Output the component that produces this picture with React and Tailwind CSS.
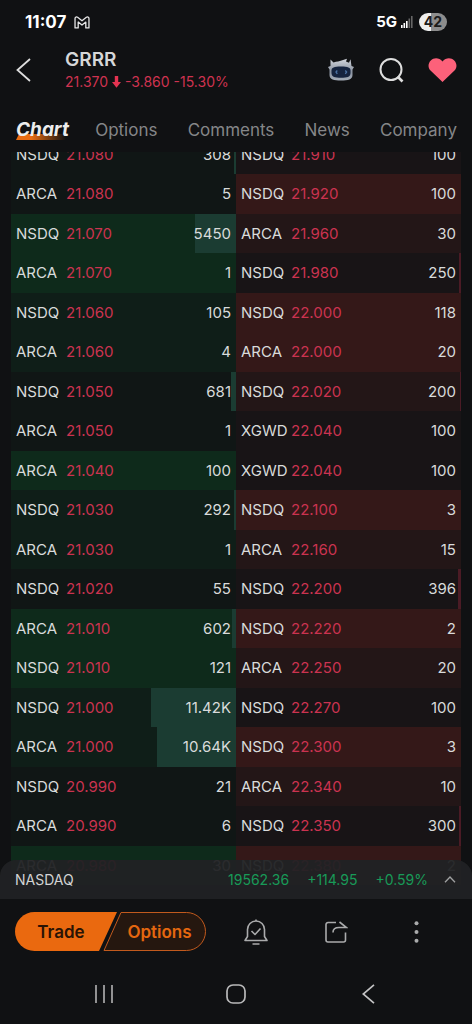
import React, { useState } from 'react';

const bids = [
  { venue: 'NSDQ', price: '21.080', size: 308 },
  { venue: 'ARCA', price: '21.080', size: 5 },
  { venue: 'NSDQ', price: '21.070', size: 5450 },
  { venue: 'ARCA', price: '21.070', size: 1 },
  { venue: 'NSDQ', price: '21.060', size: 105 },
  { venue: 'ARCA', price: '21.060', size: 4 },
  { venue: 'NSDQ', price: '21.050', size: 681 },
  { venue: 'ARCA', price: '21.050', size: 1 },
  { venue: 'ARCA', price: '21.040', size: 100 },
  { venue: 'NSDQ', price: '21.030', size: 292 },
  { venue: 'ARCA', price: '21.030', size: 1 },
  { venue: 'NSDQ', price: '21.020', size: 55 },
  { venue: 'ARCA', price: '21.010', size: 602 },
  { venue: 'NSDQ', price: '21.010', size: 121 },
  { venue: 'NSDQ', price: '21.000', size: 11420 },
  { venue: 'ARCA', price: '21.000', size: 10640 },
  { venue: 'NSDQ', price: '20.990', size: 21 },
  { venue: 'ARCA', price: '20.990', size: 6 },
  { venue: 'ARCA', price: '20.980', size: 30 },
];

const asks = [
  { venue: 'NSDQ', price: '21.910', size: 100 },
  { venue: 'NSDQ', price: '21.920', size: 100 },
  { venue: 'ARCA', price: '21.960', size: 30 },
  { venue: 'NSDQ', price: '21.980', size: 250 },
  { venue: 'NSDQ', price: '22.000', size: 118 },
  { venue: 'ARCA', price: '22.000', size: 20 },
  { venue: 'NSDQ', price: '22.020', size: 200 },
  { venue: 'XGWD', price: '22.040', size: 100 },
  { venue: 'XGWD', price: '22.040', size: 100 },
  { venue: 'NSDQ', price: '22.100', size: 3 },
  { venue: 'ARCA', price: '22.160', size: 15 },
  { venue: 'NSDQ', price: '22.200', size: 396 },
  { venue: 'NSDQ', price: '22.220', size: 2 },
  { venue: 'ARCA', price: '22.250', size: 20 },
  { venue: 'NSDQ', price: '22.270', size: 100 },
  { venue: 'NSDQ', price: '22.300', size: 3 },
  { venue: 'ARCA', price: '22.340', size: 10 },
  { venue: 'NSDQ', price: '22.350', size: 300 },
  { venue: 'NSDQ', price: '22.380', size: 2 },
];

const FULL_BAR = 30200;

// one shade per price level, repeating
const bidTones = ['bg-[#101615]', 'bg-[#0e2a1b]', 'bg-[#0f1e18]'];
const askTones = ['bg-[#181416]', 'bg-[#341818]', 'bg-[#231617]'];

const formatSize = (size) => (size >= 10000 ? `${(size / 1000).toFixed(2)}K` : String(size));

const BookSide = ({ label, rows, tones, bar }) => {
  const levels = [...new Set(rows.map(row => row.price))];

  return (
    <table aria-label={label} className="w-1/2 border-collapse text-[15px] leading-5 text-[#d9dbdb]">
      <tbody>
        {rows.map((row, i) => (
          <tr
            key={i}
            className={`relative h-[39px] even:h-10 ${tones[levels.indexOf(row.price) % 3]}`}
          >
            <td className="w-[55px] p-0 pl-[5px]">{row.venue}</td>
            <td className="p-0 text-[#cb3350]">{row.price}</td>
            <td className="p-0 pr-[5px] text-right">
              <span
                className={`absolute inset-y-0 right-0 ${bar}`}
                style={{ width: row.size > 150 ? `${(row.size / FULL_BAR) * 100}%` : 0 }}
              />
              <span className="relative">{formatSize(row.size)}</span>
            </td>
          </tr>
        ))}
      </tbody>
    </table>
  );
};

const StatusBar = () => (
  <div className="flex h-11 shrink-0 items-center justify-between pl-[25px] pr-[25px] text-white">
    <div className="flex items-center gap-2">
      <span className="text-[17px] font-bold leading-5">11:07</span>
      <svg width="16" height="13" viewBox="0 0 17 14" fill="none" stroke="#e8e8e8" strokeWidth="1.400" strokeLinejoin="round">
        <path d="M1 12.8V2.6C1 1 2.6.6 3.8 1.4L8.500 5.200 13.200 1.400C14.400.6 16 1 16 2.600V12.800H12.600V6.500L8.500 9.700 4.400 6.500V12.800Z" />
      </svg>
    </div>
    <div className="flex items-center gap-1">
      <span className="text-[15px] font-bold leading-5">5G</span>
      <svg width="12" height="12" viewBox="0 0 12 12">
        <rect x="0" y="9" width="1.600" height="3" fill="#fff" />
        <rect x="2.500" y="7" width="1.600" height="5" fill="#fff" />
        <rect x="5" y="5" width="1.600" height="7" fill="#fff" />
        <rect x="7.500" y="2.500" width="1.600" height="9.500" fill="#666" />
        <rect x="10" y="0" width="1.600" height="12" fill="#666" />
      </svg>
      <span className="ml-[2px] h-[18px] w-7 rounded-full bg-linear-to-r from-[#eeeeee] from-42% to-[#8d8d8d] to-42% text-center text-sm font-bold leading-[18px] text-[#1b1b1b]">
        42
      </span>
    </div>
  </div>
);

const RobotIcon = () => (
  <svg width="28" height="24" viewBox="0 0 28 24">
    <defs>
      <linearGradient id="shell" x1="0" y1="0" x2="0" y2="1">
        <stop offset="0" stopColor="#d3d6dd" />
        <stop offset="0.6" stopColor="#8992a0" />
        <stop offset="1" stopColor="#a4acb8" />
      </linearGradient>
    </defs>
    <path d="M3.500 8 3.500 1.500 6.500 4.500C10 3.200 12.500 3.500 14.500 2.500L20 .8 19 3.500 22 4.800 23.500 1.200 24.500 8 27 9 25.500 11.500V17C25.500 21.500 21 22.500 14 22.500S2.500 21.500 2.500 17V11.500L1 9Z" fill="url(#shell)" />
    <path d="M4.500 12.500C4.500 9.500 7 8.500 14 8.500S23.500 9.500 23.500 12.500V15C23.500 19 20 19.800 14 19.800S4.500 19 4.500 15Z" fill="#15233f" />
    <path d="M10.300 12.500 9 14 10.300 15.800M18.300 12.500 19.600 14 18.300 15.800" fill="none" stroke="#4b72a4" strokeWidth="1.300" />
  </svg>
);

const Header = () => (
  <header className="flex h-[52px] shrink-0 items-center pl-4 pr-[15px]">
    <button aria-label="Back" className="mr-[34px]">
      <svg width="15" height="24" viewBox="0 0 15 24" fill="none" stroke="#dedede" strokeWidth="1.800">
        <path d="M14 1 1.500 12 14 23" />
      </svg>
    </button>
    <div>
      <h1 className="text-[19px] font-semibold leading-6 text-[#d6d7d8]">GRRR</h1>
      <p className="flex items-center gap-1 whitespace-nowrap text-sm leading-5 text-[#cf3350]">
        <span>21.370</span>
        <svg width="9" height="12" viewBox="0 0 9 12" fill="#e43351">
          <path d="M2.800 0H6.200V6H9L4.500 11.800 0 6H2.800Z" />
        </svg>
        <span>-3.860</span>
        <span>-15.30%</span>
      </p>
    </div>
    <div className="ml-auto flex items-center gap-6">
      <button aria-label="Assistant"><RobotIcon /></button>
      <button aria-label="Search">
        <svg width="25" height="26" viewBox="0 0 25 26" fill="none" stroke="#dedede" strokeWidth="2">
          <circle cx="12" cy="12.500" r="10.500" />
          <path d="M18.500 19.500 23.500 24.500" strokeWidth="2.600" />
        </svg>
      </button>
      <button aria-label="Favorite">
        <svg width="29" height="24" viewBox="0 0 29 24" fill="#fc617a">
          <path d="M14.500 24 2.500 12.500C-.5 9.500.2 5 2.800 2.500 6-.6 11.300-.4 14.500 3.600 17.700-.4 23-.6 26.200 2.500 28.800 5 29.500 9.500 26.500 12.500Z" />
        </svg>
      </button>
    </div>
  </header>
);

const tabs = ['Chart', 'Options', 'Comments', 'News', 'Company'];

const Tabs = () => {
  const [active, setActive] = useState('Chart');

  return (
    <nav className="flex h-14 shrink-0 items-end justify-between pb-[10px] pl-4 pr-[15px]">
      {tabs.map(tab => (
        <button
          key={tab}
          onClick={() => setActive(tab)}
          className={
            tab === active
              ? 'relative -mr-1 text-[19px] font-bold italic leading-6 text-[#ededed]'
              : 'text-[17px] leading-6 text-[#858688]'
          }
        >
          {tab === active && (
            <span className="absolute bottom-[2px] left-0 h-[6px] w-[50px] bg-linear-to-r from-[#e96c12] from-30% to-transparent [clip-path:polygon(3px_0,100%_0,100%_100%,0_100%)]" />
          )}
          <span className="relative">{tab}</span>
        </button>
      ))}
    </nav>
  );
};

const IndexBar = () => (
  <div className="relative -mt-[39px] flex h-[39px] shrink-0 items-center rounded-t-2xl bg-[#212224]/95 pl-[15px] pr-4 text-sm leading-5 text-[#189a58]">
    <span className="mr-auto text-[#d2d3d4]">NASDAQ</span>
    <span>19562.36</span>
    <span className="ml-[18px]">+114.95</span>
    <span className="ml-[18px]">+0.59%</span>
    <button aria-label="Expand indices" className="ml-4">
      <svg width="12" height="7" viewBox="0 0 12 7" fill="none" stroke="#a0a1a2" strokeWidth="1.300">
        <path d="M1 6.300 6 1 11 6.300" />
      </svg>
    </button>
  </div>
);

const ActionBar = () => (
  <div className="flex h-[65px] shrink-0 items-center px-[15px]">
    <button className="h-[39px] w-[102px] rounded-l-full bg-[#ea690f] pr-[10px] text-[17px] font-semibold leading-6 text-[#2b1405] [clip-path:polygon(0_0,100%_0,84px_100%,0_100%)]">
      Trade
    </button>
    <button className="relative -ml-[14px] h-[39px] w-[103px] pl-[10px] text-[17px] font-semibold leading-6 text-[#e5670f]">
      <svg className="absolute inset-0" width="103" height="39" viewBox="0 0 103 39" fill="#25170f" stroke="#c25a1d" strokeWidth="1">
        <path d="M18 .5H83.500A19 19 0 0 1 83.500 38.500H1Z" />
      </svg>
      <span className="relative">Options</span>
    </button>
    <div className="ml-[10px] grid flex-1 grid-cols-3 justify-items-center">
      <button aria-label="Alerts">
        <svg width="24" height="26" viewBox="0 0 24 26" fill="none" stroke="#aaabac" strokeWidth="1.600" strokeLinejoin="round">
          <path d="M12 .5V2.500M1 21.500 3.500 17.500V10.500A8.500 8.500 0 0 1 20.500 10.500V17.500L23 21.500Z" />
          <path d="M7.500 12 11 15.500 16.500 9.500M8.500 25H15.500" />
        </svg>
      </button>
      <button aria-label="Share">
        <svg width="23" height="22" viewBox="0 0 23 22" fill="none" stroke="#aaabac" strokeWidth="1.600">
          <path d="M11 1.500H3A2 2 0 0 0 1 3.500V19A2 2 0 0 0 3 21H18.500A2 2 0 0 0 20.500 19V11.500" />
          <path d="M8 11.500C8 8 10.500 6.500 14 6.500H21.500L14.500 1" />
        </svg>
      </button>
      <button aria-label="More">
        <svg width="5" height="22" viewBox="0 0 5 22" fill="#aaabac">
          <circle cx="2.500" cy="2.300" r="2" />
          <circle cx="2.500" cy="11" r="2" />
          <circle cx="2.500" cy="19.700" r="2" />
        </svg>
      </button>
    </div>
  </div>
);

const SystemNav = () => (
  <div className="grid h-[60px] shrink-0 grid-cols-3 items-center justify-items-center px-[38px]">
    <button aria-label="Recents">
      <svg width="20" height="20" viewBox="0 0 20 20" stroke="#a9a9aa" strokeWidth="1.700">
        <path d="M2 1V19M10 1V19M18 1V19" />
      </svg>
    </button>
    <button aria-label="Home">
      <svg width="20" height="20" viewBox="0 0 20 20" fill="none" stroke="#b9b9ba" strokeWidth="1.700">
        <rect x="1" y="1" width="18" height="18" rx="6" />
      </svg>
    </button>
    <button aria-label="System back">
      <svg width="13" height="20" viewBox="0 0 13 20" fill="none" stroke="#c3c3c4" strokeWidth="1.700">
        <path d="M12 .8 1.200 10 12 19.200" />
      </svg>
    </button>
  </div>
);

const App = () => {
  return (
    <div className="flex h-screen flex-col bg-[#101113] font-['Inter','Liberation_Sans',sans-serif]">
      <StatusBar />
      <Header />
      <Tabs />
      <main className="min-h-0 flex-1 overflow-hidden px-[11px]">
        {/* list is scrolled part way into its first row */}
        <div className="-mt-[17px] flex items-start">
          <BookSide label="Bids" rows={bids} tones={bidTones} bar="bg-[#1b3c32]" />
          <BookSide label="Asks" rows={asks} tones={askTones} bar="bg-[#4b1b25]" />
        </div>
      </main>
      <IndexBar />
      <ActionBar />
      <SystemNav />
    </div>
  );
};

export default App;
